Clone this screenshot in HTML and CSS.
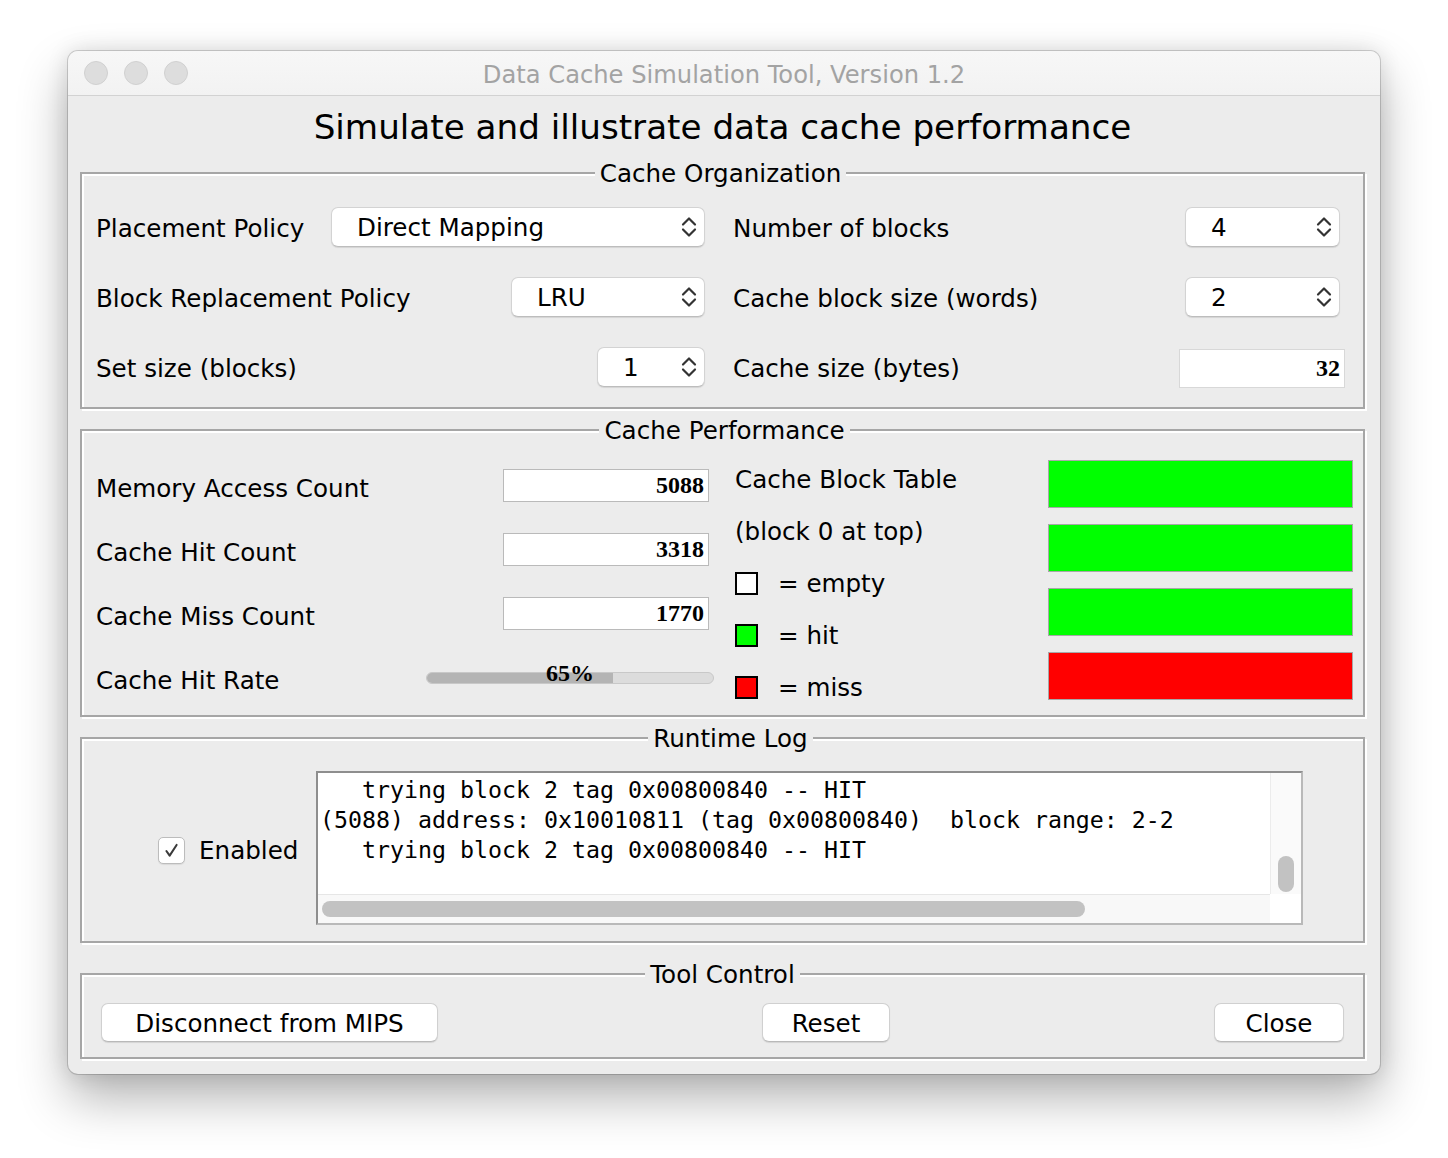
FILE: index.html
```html
<!DOCTYPE html>
<html lang="en">
<head>
<meta charset="utf-8">
<title>Data Cache Simulation Tool, Version 1.2</title>
<link rel="stylesheet" href="styles.css">
</head>
<body>
<div class="window">
  <div class="titlebar">
    <div class="lights"><span class="light"></span><span class="light"></span><span class="light"></span></div>
    <div class="wtitle">Data Cache Simulation Tool, Version 1.2</div>
    <div class="titlebar-spacer"></div>
  </div>
  <div class="content">
    <h1 class="heading">Simulate and illustrate data cache performance</h1>

    <fieldset class="group group-org">
      <legend>Cache Organization</legend>
      <div class="org-grid">
        <div class="row">
          <span class="label">Placement Policy</span>
          <div class="combo combo-direct"><span class="combo-text">Direct Mapping</span>
            <svg class="chev" viewBox="0 0 16 22"><polyline points="2,8.5 8,2.5 14,8.5"/><polyline points="2,13.5 8,19.5 14,13.5"/></svg></div>
        </div>
        <div class="row">
          <span class="label">Number of blocks</span>
          <div class="combo combo-num"><span class="combo-text">4</span>
            <svg class="chev" viewBox="0 0 16 22"><polyline points="2,8.5 8,2.5 14,8.5"/><polyline points="2,13.5 8,19.5 14,13.5"/></svg></div>
        </div>
        <div class="row">
          <span class="label">Block Replacement Policy</span>
          <div class="combo combo-lru"><span class="combo-text">LRU</span>
            <svg class="chev" viewBox="0 0 16 22"><polyline points="2,8.5 8,2.5 14,8.5"/><polyline points="2,13.5 8,19.5 14,13.5"/></svg></div>
        </div>
        <div class="row">
          <span class="label">Cache block size (words)</span>
          <div class="combo combo-num"><span class="combo-text">2</span>
            <svg class="chev" viewBox="0 0 16 22"><polyline points="2,8.5 8,2.5 14,8.5"/><polyline points="2,13.5 8,19.5 14,13.5"/></svg></div>
        </div>
        <div class="row">
          <span class="label">Set size (blocks)</span>
          <div class="combo combo-set"><span class="combo-text">1</span>
            <svg class="chev" viewBox="0 0 16 22"><polyline points="2,8.5 8,2.5 14,8.5"/><polyline points="2,13.5 8,19.5 14,13.5"/></svg></div>
        </div>
        <div class="row">
          <span class="label">Cache size (bytes)</span>
          <div class="field field-size">32</div>
        </div>
      </div>
    </fieldset>

    <fieldset class="group group-perf">
      <legend>Cache Performance</legend>
      <div class="perf">
        <div class="perf-left">
          <div class="perf-row"><span class="label">Memory Access Count</span><div class="field field-count">5088</div></div>
          <div class="perf-row"><span class="label">Cache Hit Count</span><div class="field field-count">3318</div></div>
          <div class="perf-row"><span class="label">Cache Miss Count</span><div class="field field-count">1770</div></div>
          <div class="perf-row"><span class="label">Cache Hit Rate</span>
            <div class="progress"><div class="progress-fill" style="width:65%"></div><span class="progress-text">65%</span></div>
          </div>
        </div>
        <div class="perf-legend">
          <div class="legend-line">Cache Block Table</div>
          <div class="legend-line">(block 0 at top)</div>
          <div class="legend-line"><span class="swatch swatch-empty"></span><span class="legend-text">= empty</span></div>
          <div class="legend-line"><span class="swatch swatch-hit"></span><span class="legend-text">= hit</span></div>
          <div class="legend-line"><span class="swatch swatch-miss"></span><span class="legend-text">= miss</span></div>
        </div>
        <div class="blocks">
          <div class="block block-hit"></div>
          <div class="block block-hit"></div>
          <div class="block block-hit"></div>
          <div class="block block-miss"></div>
        </div>
      </div>
    </fieldset>

    <fieldset class="group group-log">
      <legend>Runtime Log</legend>
      <div class="log-row">
        <label class="check">
          <span class="checkbox"><svg viewBox="0 0 27 27"><polyline points="8,14 11.5,19 19,7.5"/></svg></span>
          <span class="check-text">Enabled</span>
        </label>
        <div class="log">
          <div class="log-text">   trying block 2 tag 0x00800840 -- HIT
(5088) address: 0x10010811 (tag 0x00800840)  block range: 2-2
   trying block 2 tag 0x00800840 -- HIT</div>
          <div class="vscroll"><div class="vthumb"></div></div>
          <div class="hscroll"><div class="hthumb"></div></div>
          <div class="corner"></div>
        </div>
      </div>
    </fieldset>

    <fieldset class="group group-ctrl">
      <legend>Tool Control</legend>
      <div class="buttons">
        <button class="btn btn-disconnect">Disconnect from MIPS</button>
        <div class="btn-center"><button class="btn btn-reset">Reset</button></div>
        <button class="btn btn-close">Close</button>
      </div>
    </fieldset>
  </div>
</div>
</body>
</html>
```

FILE: styles.css
```css
html, body {
  margin: 0;
  padding: 0;
  background: #ffffff;
}

body {
  font-family: "DejaVu Sans", "Open Sans", sans-serif;
  color: #111;
  min-height: 1158px;
  padding-top: 51px;
  box-sizing: border-box;
}

.window {
  margin: 0 0 0 68px;
  width: 1312px;
  height: 1023px;
  border-radius: 10px;
  overflow: hidden;
  background: #ececec;
  box-shadow: 0 0 0 1px rgba(0,0,0,0.16), 0 24px 50px rgba(0,0,0,0.30), 0 0 22px rgba(0,0,0,0.12);
  display: flex;
  flex-direction: column;
}

/* Title bar */
.titlebar {
  height: 44px;
  border-bottom: 1px solid #d2d2d2;
  background: linear-gradient(#f7f7f7, #f2f2f2);
  display: grid;
  grid-template-columns: 1fr auto 1fr;
  align-items: center;
}

.lights {
  display: flex;
  gap: 16px;
  padding-left: 16px;
}

.light {
  width: 24px;
  height: 24px;
  box-sizing: border-box;
  border-radius: 50%;
  background: #dddddd;
  border: 1px solid #d0d0d0;
}

.wtitle {
  font-size: 24.2px;
  color: #a3a3a3;
  white-space: nowrap;
  padding-top: 3px;
}

/* Content */
.content {
  flex: 1;
  padding: 0 15px 15px 12px;
  display: flex;
  flex-direction: column;
}

.heading {
  margin: 11px 0 11px;
  font-weight: normal;
  font-size: 34.2px;
  line-height: 40px;
  text-align: center;
  color: #000;
}

.group {
  margin: 0;
  min-width: 0;
  border: 2px solid #a6a6a6;
  box-shadow: inset 2px 2px 0 #ffffff, 2px 2px 0 #ffffff;
}

.group legend {
  margin: 0 auto;
  padding: 2px 5px 0;
  font-size: 24.6px;
  line-height: 28px;
  background: #ececec;
  color: #000;
}

.label {
  font-size: 24.6px;
  color: #000;
  white-space: nowrap;
}

/* Cache organization */
.group-org {
  padding: 19px 18px 20px 14px;
}

.org-grid {
  display: grid;
  grid-template-columns: 609px 612px;
  column-gap: 28px;
  row-gap: 30px;
  grid-auto-rows: 40px;
}

.row {
  display: flex;
  align-items: center;
  justify-content: space-between;
}

.row .label {
  padding-top: 2px;
}

.combo {
  box-sizing: border-box;
  height: 40px;
  background: #fff;
  border: 1px solid #d3d3d3;
  border-bottom-color: #bdbdbd;
  border-radius: 7px;
  box-shadow: 0 1px 1px rgba(0,0,0,0.10);
  display: flex;
  align-items: center;
  padding: 0 7px 0 25px;
}

.combo-text {
  flex: 1;
  font-size: 24.6px;
  color: #000;
  white-space: nowrap;
}

.chev {
  width: 16px;
  height: 22px;
  fill: none;
  stroke: #333;
  stroke-width: 2.2;
  stroke-linecap: round;
  stroke-linejoin: round;
}

.combo-direct { width: 374px; }
.combo-lru { width: 194px; }
.combo-set { width: 108px; }
.combo-num { width: 155px; margin-right: 5px; }

.field {
  box-sizing: border-box;
  background: #fff;
  font-family: "Liberation Serif", "Times New Roman", serif;
  font-weight: bold;
  font-size: 24px;
  color: #000;
  text-align: right;
  display: flex;
  align-items: center;
  justify-content: flex-end;
}

.field-size {
  width: 166px;
  height: 39px;
  border: 1px solid #d8d8d8;
  padding-right: 4px;
  margin-top: 3px;
}

/* Cache performance */
.group-perf {
  margin-top: 6px;
  padding: 10px 10px 2px 14px;
}

.perf {
  display: flex;
  align-items: flex-start;
}

.perf-left {
  width: 618px;
  display: flex;
  flex-direction: column;
}

.perf-row {
  height: 64px;
  display: flex;
  align-items: center;
  justify-content: space-between;
}

.perf-row .label {
  padding-top: 2px;
}

.field-count {
  width: 206px;
  height: 33px;
  border: 1px solid #bababa;
  padding-right: 4px;
  margin-right: 5px;
  margin-top: -4px;
}

.progress {
  position: relative;
  box-sizing: border-box;
  width: 288px;
  height: 12px;
  border-radius: 6px;
  background: #dcdcdc;
  border: 1px solid #c8c8c8;
  overflow: visible;
  margin-top: -2px;
}

.progress-fill {
  height: 100%;
  background: #b4b4b4;
  border-radius: 5px 0 0 5px;
}

.progress-text {
  position: absolute;
  left: 0;
  right: 0;
  top: -13px;
  text-align: center;
  font-family: "Liberation Serif", "Times New Roman", serif;
  font-weight: bold;
  font-size: 24px;
  line-height: 26px;
  color: #000;
}

.perf-legend {
  width: 313px;
  margin-left: 21px;
  margin-top: -2px;
  display: flex;
  flex-direction: column;
}

.legend-line {
  height: 52px;
  display: flex;
  align-items: center;
  font-size: 24.6px;
  color: #000;
  white-space: nowrap;
}

.swatch {
  box-sizing: border-box;
  width: 23px;
  height: 23px;
  border: 2px solid #000;
  margin-right: 20px;
}

.swatch-empty { background: #fff; }
.swatch-hit { background: #00ff00; }
.swatch-miss { background: #ff0000; }

.blocks {
  width: 305px;
  margin-top: 5px;
  display: flex;
  flex-direction: column;
  gap: 16px;
}

.block {
  box-sizing: border-box;
  height: 48px;
  border: 1px solid #a8a8a8;
}

.block-hit { background: #00ff00; }
.block-miss { background: #ff0000; }

/* Runtime log */
.group-log {
  margin-top: 6px;
  padding: 18px 60px 16px 76px;
}

.log-row {
  display: flex;
  align-items: center;
}

.check {
  display: flex;
  align-items: center;
  gap: 14px;
  margin-top: 4px;
}

.checkbox {
  box-sizing: border-box;
  width: 27px;
  height: 27px;
  border-radius: 5px;
  background: #fff;
  border: 1px solid #bcbcbc;
  box-shadow: 0 1px 1px rgba(0,0,0,0.08);
  display: flex;
}

.checkbox svg {
  width: 25px;
  height: 25px;
  fill: none;
  stroke: #3a3a3a;
  stroke-width: 2.2;
  stroke-linecap: round;
  stroke-linejoin: round;
}

.check-text {
  font-size: 24.6px;
  color: #000;
}

.log {
  margin-left: auto;
  box-sizing: border-box;
  width: 987px;
  height: 154px;
  background: #fff;
  border: 2px solid #b9b9b9;
  border-top-color: #8e8e8e;
  border-left-color: #8e8e8e;
  display: grid;
  grid-template-columns: 1fr 31px;
  grid-template-rows: 121px 29px;
}

.log-text {
  padding: 2px 0 0 2px;
  font-family: "DejaVu Sans Mono", "Liberation Mono", monospace;
  font-size: 23.25px;
  line-height: 30px;
  white-space: pre;
  color: #000;
  overflow: hidden;
}

.vscroll {
  background: #fafafa;
  border-left: 1px solid #ececec;
  display: flex;
  align-items: flex-end;
  justify-content: center;
  padding-bottom: 2px;
}

.vthumb {
  width: 16px;
  height: 36px;
  border-radius: 8px;
  background: #c2c2c2;
}

.hscroll {
  background: #f8f8f8;
  border-top: 1px solid #e6e6e6;
  padding: 6px 0 0 4px;
}

.hthumb {
  width: 763px;
  height: 16px;
  border-radius: 8px;
  background: #c2c2c2;
}

.corner {
  background: #fff;
}

/* Tool control */
.group-ctrl {
  margin-top: 16px;
  padding: 14px 19px 15px 19px;
}

.buttons {
  display: flex;
  align-items: center;
}

.btn-center {
  flex: 1;
  display: flex;
  justify-content: center;
}

.btn {
  box-sizing: border-box;
  height: 39px;
  margin: 0;
  padding: 2px 0 0;
  background: #fff;
  border: 1px solid #d0d0d0;
  border-bottom-color: #b9b9b9;
  border-radius: 7px;
  box-shadow: 0 1px 1px rgba(0,0,0,0.10);
  font-family: "DejaVu Sans", "Open Sans", sans-serif;
  font-size: 24.6px;
  color: #000;
}

.btn-disconnect { width: 337px; }
.btn-reset { width: 128px; }
.btn-close { width: 130px; }
```
